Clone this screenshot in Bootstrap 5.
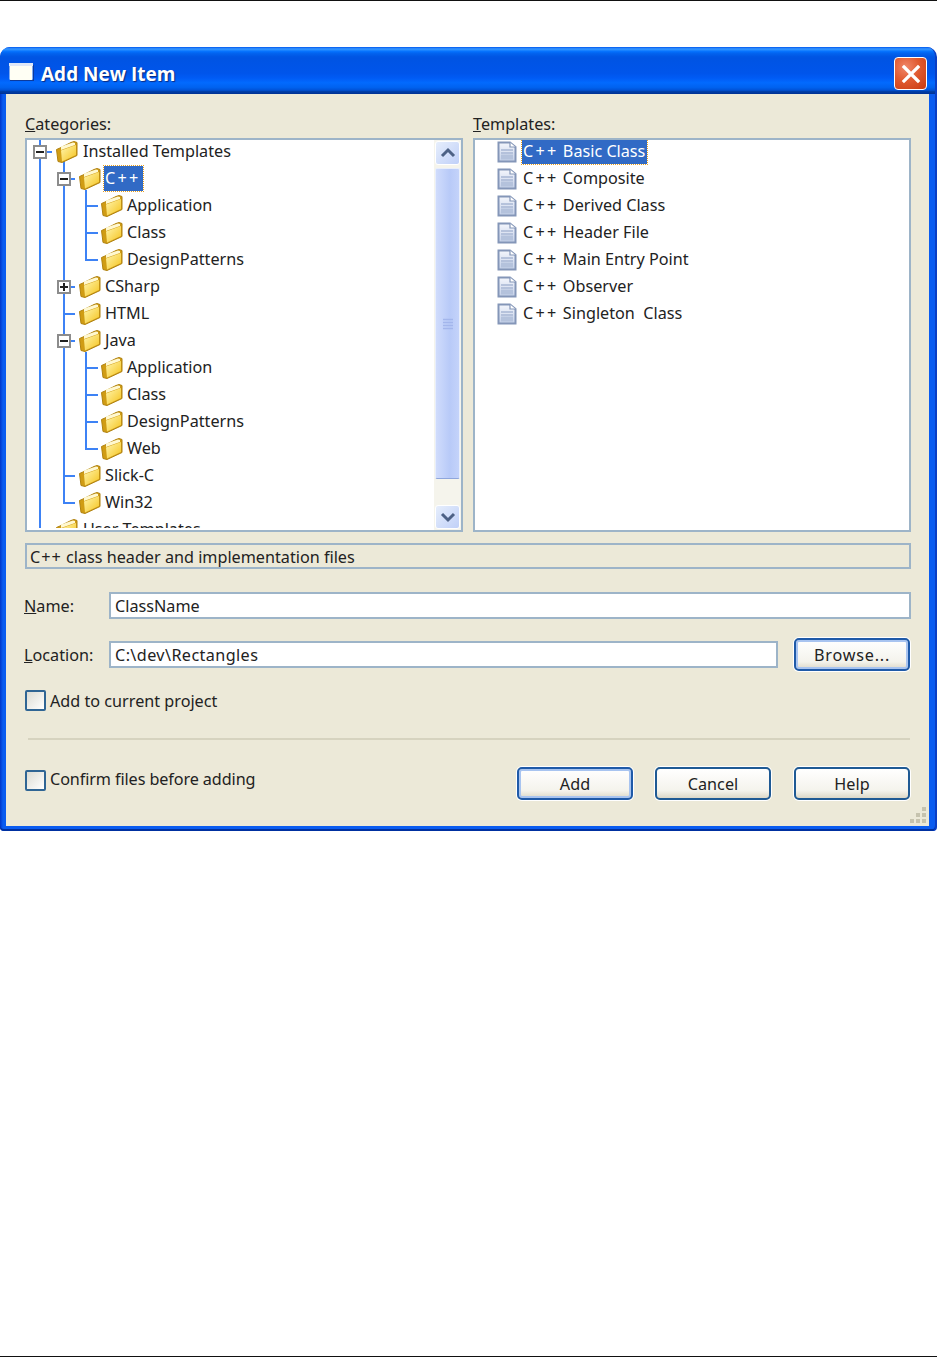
<!DOCTYPE html>
<html lang="en">
<head>
<meta charset="utf-8">
<title>Add New Item</title>
<link rel="stylesheet" href="https://cdn.jsdelivr.net/npm/bootstrap@5.3.0/dist/css/bootstrap.min.css">
<style>
html,body{height:100%;}
body{margin:0;background:#fff;font-family:"Noto Sans","DejaVu Sans",sans-serif;font-size:16.2px;color:#222;line-height:20px;}
.page-frame{height:1357px;border-top:1px solid #111;border-bottom:1px solid #111;padding-top:46px;}
.xp-window{height:784px;border-radius:10px 10px 4px 4px;padding:0 6px 5px;background:linear-gradient(90deg,#0035c8 0,#0a5cf0 3px,#0a5cf0 100%);border-right:2px solid #0a3fc4;overflow:hidden;box-shadow:inset 0 -2px 0 #0030a0;}
.xp-title{height:47px;margin:0 -6px;padding:0 8px 0 9px;background:linear-gradient(180deg,#0058ee 0,#3593ff 4%,#288eff 6%,#127dff 8%,#036ffc 10%,#0262ee 14%,#0057e5 20%,#0054e3 24%,#0055eb 56%,#005bf5 66%,#026afe 76%,#0062ef 86%,#0052d6 92%,#0040ab 94%,#003092 100%);}
.xp-title-text{font-family:"Open Sans","DejaVu Sans",sans-serif;font-weight:700;font-size:19px;color:#fff;text-shadow:1px 1px 1px #0a2a80;margin-left:7px;padding-top:6px;}
.xp-appicon{width:25px;height:18px;margin-top:2px;}
.xp-close{width:33px;height:33px;padding:0;margin-top:10px;border:1.5px solid #fff;border-radius:4px;background:radial-gradient(circle at 35% 30%,#f0876a 0,#e05a30 45%,#c83a10 100%);}
.xp-body{height:732px;background:#ece9d8;padding:20px 20px 0 19px;position:relative;}
.xp-label{height:24px;line-height:20px;}
.xp-panel{width:438px;height:394px;background:#fff;border:2px solid #9db4c8;overflow:hidden;position:relative;}
.xp-tree{position:relative;height:390px;overflow:hidden;margin-top:-2px;}
.xp-lines{position:absolute;left:-2px;top:0;}
.xp-row{height:27px;white-space:nowrap;padding-bottom:2px;}
.xp-d0{padding-left:28px;}
.xp-d1{padding-left:51px;}
.xp-d2{padding-left:73px;}
.xp-t{padding-left:22px;}
.xp-folder{width:24px;height:24px;flex:none;margin:2px 3px 0 0;}
.xp-d0 .xp-folder{margin-right:4px;}
.xp-doc{width:20px;height:22px;flex:none;margin:2px 6px 0 0;}
.xp-cpp{letter-spacing:2.3px;}
.xp-cpp-tight{letter-spacing:1px;}
.xp-sel{background:#316ac5;color:#fff;outline:1px dotted #e8a020;height:25px;line-height:24px;padding:0 2px 0 1px;margin-left:-1px;margin-top:1px;}
.xp-scroll{width:27px;flex:none;background:#f5f4ec;height:390px;padding:1px;}
.xp-arrow{height:24px;flex:none;background:linear-gradient(135deg,#e6eefc,#c0d0f8);border:1px solid #fff;border-radius:3px;}
.xp-thumb{height:311px;margin-top:3px;background:linear-gradient(90deg,#d0dcfc,#b8caf8 60%,#c4d3fa);border:1px solid #e8eefc;border-bottom-color:#8fa6dc;border-radius:2px;}
.xp-desc{height:26px;margin-top:11px;border:2px solid #9db4c8;padding-left:3px;line-height:24px;width:886px;}
.xp-field-label{width:84px;flex:none;margin-left:-1px;margin-right:1px;}
.form-control.xp-input{height:27px;min-height:0;border:2px solid #9db4c8;border-radius:0;padding:0 4px;font-size:16.2px;line-height:23px;color:#222;background:#fff;box-shadow:none;}
.xp-name{margin-top:23px;width:886px;}
.xp-loc{margin-top:19px;height:33px;width:885px;}
.xp-loc .xp-input{width:669px;flex:none;letter-spacing:.4px;}
.btn.xp-btn{width:116px;height:33px;padding:0;font-size:16.2px;line-height:26px;color:#222;border:2px solid #1f5a94;border-radius:5px;background:linear-gradient(180deg,#fff 0,#f4f3ec 75%,#dcd8c8 100%);box-shadow:0 0 0 1px #fff;}
.btn.xp-default{box-shadow:0 0 0 1px #fff,inset 0 0 0 2px #a8c4f0;border-color:#1f5aa8;}
.btn.xp-browse{letter-spacing:.8px;}
.xp-check-row{margin-top:19px;height:21px;}
.xp-confirm span{padding-bottom:2px;}
.form-check-input.xp-box{width:21px;height:21px;margin:0 4px 0 0;border:2px solid #2f6594;border-radius:2px;background:linear-gradient(135deg,#dcdcd4,#fff);float:none;}
.xp-sep{height:2px;margin:27px 1px 0 3px;background:#d6d3bf;width:882px;}
.xp-bottom{margin-top:27px;height:33px;width:885px;}
.xp-confirm{margin-top:2px;letter-spacing:-.1px;}
.xp-gap1{margin-right:22px;}
.xp-gap2{margin-right:23px;}
.xp-grip{position:absolute;right:2px;bottom:2px;width:18px;height:18px;}
</style>
</head>
<body>
<svg width="0" height="0" class="d-block" aria-hidden="true">
  <defs>
    <linearGradient id="fg" x1="0" y1="0" x2="1" y2="1"><stop offset="0" stop-color="#fff6b0"/><stop offset="1" stop-color="#f5c31c"/></linearGradient>
    <linearGradient id="dg" x1="0" y1="0" x2="0" y2="1"><stop offset="0" stop-color="#f4f6fc"/><stop offset="1" stop-color="#c4d0e8"/></linearGradient>
    <symbol id="folder" viewBox="0 0 24 24">
      <path d="M1.5 9.5 5 8 16 2.5 19 1.5 22 2.5V15.5L7 22.5 3 21.5Z" fill="#d09c14" stroke="#b08210"/>
      <path d="M6 6.5 18 2.5 20 3V5L6 10Z" fill="#fff8d0"/>
      <path d="M6 10.5 21 5V15L7 21.5Z" fill="url(#fg)"/>
    </symbol>
    <symbol id="doc" viewBox="0 0 20 22">
      <path d="M1.5 1.5H13L18.5 6V20.5H1.5Z" fill="url(#dg)" stroke="#8496b8" stroke-width="2"/>
      <path d="M13 1.5V6H18.5" fill="#fff" stroke="#8496b8" stroke-width="1.2"/>
      <path d="M4 9H16M4 12H16" stroke="#a8b6d4" stroke-width="1.4"/>
      <rect x="4" y="13.5" width="12" height="5" fill="#b4c2dc"/>
    </symbol>
  </defs>
</svg>
<div class="page-frame">
  <div class="xp-window">
    <div class="xp-title d-flex align-items-center">
      <svg class="xp-appicon" viewBox="0 0 25 18" aria-hidden="true"><rect x="0.5" y="0.5" width="23" height="16.5" rx="1" fill="#fffff4"/><rect x="0" y="0" width="24" height="3" fill="#dfe8f8"/><rect x="24" y="2" width="1" height="16" fill="#0c3a9c"/><rect x="1" y="17" width="24" height="1" fill="#0c3a9c"/></svg>
      <span class="xp-title-text flex-grow-1">Add New Item</span>
      <button type="button" class="xp-close d-flex align-items-center justify-content-center align-self-start" aria-label="Close">
        <svg width="22" height="22" viewBox="0 0 22 22" aria-hidden="true"><path d="M4 4 18 18M18 4 4 18" stroke="#fff" stroke-width="3.2" stroke-linecap="square" fill="none"/></svg>
      </button>
    </div>
    <div class="xp-body">
      <div class="d-flex" style="gap:10px">
        <div>
          <div class="xp-label"><u>C</u>ategories:</div>
          <div class="xp-panel d-flex">
            <div class="xp-tree flex-grow-1">
              <svg class="xp-lines" width="409" height="390" viewBox="25 138 409 390" fill="none" aria-hidden="true">
                <g stroke="#3d82f5" stroke-width="2">
                  <path d="M40 140V530M47 152H52"/>
                  <path d="M64 160V504M64 476H75M63 503H75M71 179H75M71 287H75M64 314H75M71 341H75"/>
                  <path d="M86 190V261M86 206H98M86 233H98M85 260H98"/>
                  <path d="M86 352V450M86 368H98M86 395H98M86 422H98M85 449H98"/>
                </g>
                <g fill="#fff" stroke="#8c8c8c" stroke-width="2">
                  <rect x="34" y="146" width="12" height="12"/>
                  <rect x="58" y="173" width="12" height="12"/>
                  <rect x="58" y="281" width="12" height="12"/>
                  <rect x="58" y="335" width="12" height="12"/>
                </g>
                <g stroke="#222" stroke-width="2">
                  <path d="M36 152H44M60 179H68M60 287H68M64 283V291M60 341H68"/>
                </g>
              </svg>
              <div class="xp-row xp-d0 d-flex align-items-center position-relative"><svg class="xp-folder"><use href="#folder"/></svg>Installed Templates</div>
              <div class="xp-row xp-d1 d-flex align-items-center position-relative"><svg class="xp-folder"><use href="#folder"/></svg><span class="xp-sel"><span class="xp-cpp">C++</span></span></div>
              <div class="xp-row xp-d2 d-flex align-items-center position-relative"><svg class="xp-folder"><use href="#folder"/></svg>Application</div>
              <div class="xp-row xp-d2 d-flex align-items-center position-relative"><svg class="xp-folder"><use href="#folder"/></svg>Class</div>
              <div class="xp-row xp-d2 d-flex align-items-center position-relative"><svg class="xp-folder"><use href="#folder"/></svg>DesignPatterns</div>
              <div class="xp-row xp-d1 d-flex align-items-center position-relative"><svg class="xp-folder"><use href="#folder"/></svg>CSharp</div>
              <div class="xp-row xp-d1 d-flex align-items-center position-relative"><svg class="xp-folder"><use href="#folder"/></svg>HTML</div>
              <div class="xp-row xp-d1 d-flex align-items-center position-relative"><svg class="xp-folder"><use href="#folder"/></svg>Java</div>
              <div class="xp-row xp-d2 d-flex align-items-center position-relative"><svg class="xp-folder"><use href="#folder"/></svg>Application</div>
              <div class="xp-row xp-d2 d-flex align-items-center position-relative"><svg class="xp-folder"><use href="#folder"/></svg>Class</div>
              <div class="xp-row xp-d2 d-flex align-items-center position-relative"><svg class="xp-folder"><use href="#folder"/></svg>DesignPatterns</div>
              <div class="xp-row xp-d2 d-flex align-items-center position-relative"><svg class="xp-folder"><use href="#folder"/></svg>Web</div>
              <div class="xp-row xp-d1 d-flex align-items-center position-relative"><svg class="xp-folder"><use href="#folder"/></svg>Slick-C</div>
              <div class="xp-row xp-d1 d-flex align-items-center position-relative"><svg class="xp-folder"><use href="#folder"/></svg>Win32</div>
              <div class="xp-row xp-d0 d-flex align-items-center position-relative"><svg class="xp-folder"><use href="#folder"/></svg>User Templates</div>
            </div>
            <div class="xp-scroll d-flex flex-column">
              <div class="xp-arrow d-flex align-items-center justify-content-center"><svg width="16" height="12" viewBox="0 0 16 12" aria-hidden="true"><path d="M2 9 8 3 14 9" fill="none" stroke="#4d6185" stroke-width="3"/></svg></div>
              <div class="xp-thumb d-flex align-items-center justify-content-center"><svg width="12" height="12" viewBox="0 0 12 12" aria-hidden="true"><path d="M1 1.5H11M1 4.5H11M1 7.5H11M1 10.5H11" stroke="#a3b6ec" stroke-width="1.3"/></svg></div>
              <div class="flex-grow-1"></div>
              <div class="xp-arrow d-flex align-items-center justify-content-center"><svg width="16" height="12" viewBox="0 0 16 12" aria-hidden="true"><path d="M2 3 8 9 14 3" fill="none" stroke="#4d6185" stroke-width="3"/></svg></div>
            </div>
          </div>
        </div>
        <div>
          <div class="xp-label"><u>T</u>emplates:</div>
          <div class="xp-panel">
            <div class="xp-tree">
              <div class="xp-row xp-t d-flex align-items-center"><svg class="xp-doc"><use href="#doc"/></svg><span class="xp-sel"><span class="xp-cpp">C++</span> Basic Class</span></div>
              <div class="xp-row xp-t d-flex align-items-center"><svg class="xp-doc"><use href="#doc"/></svg><span><span class="xp-cpp">C++</span> Composite</span></div>
              <div class="xp-row xp-t d-flex align-items-center"><svg class="xp-doc"><use href="#doc"/></svg><span><span class="xp-cpp">C++</span> Derived Class</span></div>
              <div class="xp-row xp-t d-flex align-items-center"><svg class="xp-doc"><use href="#doc"/></svg><span><span class="xp-cpp">C++</span> Header File</span></div>
              <div class="xp-row xp-t d-flex align-items-center"><svg class="xp-doc"><use href="#doc"/></svg><span><span class="xp-cpp">C++</span> Main Entry Point</span></div>
              <div class="xp-row xp-t d-flex align-items-center"><svg class="xp-doc"><use href="#doc"/></svg><span><span class="xp-cpp">C++</span> Observer</span></div>
              <div class="xp-row xp-t d-flex align-items-center"><svg class="xp-doc"><use href="#doc"/></svg><span><span class="xp-cpp">C++</span> Singleton&nbsp; Class</span></div>
            </div>
          </div>
        </div>
      </div>
      <div class="xp-desc"><span class="xp-cpp-tight">C++</span> class header and implementation files</div>
      <div class="xp-name d-flex align-items-center">
        <label class="xp-field-label"><u>N</u>ame:</label>
        <input class="form-control xp-input" type="text" value="ClassName">
      </div>
      <div class="xp-loc d-flex align-items-center justify-content-between">
        <label class="xp-field-label"><u>L</u>ocation:</label>
        <input class="form-control xp-input" type="text" value="C:\dev\Rectangles">
        <button type="button" class="btn xp-btn xp-default xp-browse ms-auto">Browse...</button>
      </div>
      <div class="xp-check-row d-flex align-items-center">
        <input class="form-check-input xp-box" type="checkbox">
        <span>Add to current project</span>
      </div>
      <div class="xp-sep"></div>
      <div class="xp-bottom d-flex align-items-start">
        <div class="xp-confirm d-flex align-items-center flex-grow-1">
          <input class="form-check-input xp-box" type="checkbox">
          <span>Confirm files before adding</span>
        </div>
        <button type="button" class="btn xp-btn xp-default xp-gap1">Add</button>
        <button type="button" class="btn xp-btn xp-gap2">Cancel</button>
        <button type="button" class="btn xp-btn">Help</button>
      </div>
      <svg class="xp-grip" viewBox="0 0 18 18" aria-hidden="true"><g fill="#c6c3ae"><rect x="13" y="1" width="4" height="4"/><rect x="7" y="7" width="4" height="4"/><rect x="13" y="7" width="4" height="4"/><rect x="1" y="13" width="4" height="4"/><rect x="7" y="13" width="4" height="4"/><rect x="13" y="13" width="4" height="4"/></g></svg>
    </div>
  </div>
</div>
</body>
</html>
